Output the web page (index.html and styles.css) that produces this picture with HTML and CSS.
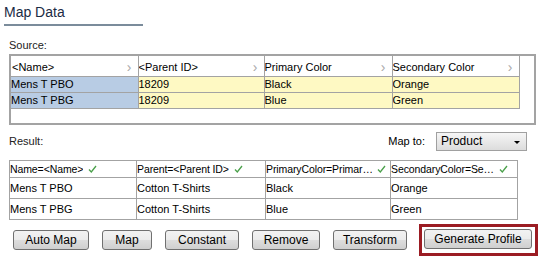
FILE: index.html
```html
<!DOCTYPE html>
<html>
<head>
<meta charset="utf-8">
<link rel="stylesheet" href="styles.css">
</head>
<body>
<div class="page">
  <div class="title">Map Data</div>
  <div class="label source-label">Source:</div>
  <div class="srcbox">
    <table class="src">
      <colgroup><col class="c1"><col class="c2"><col class="c3"><col class="c4"></colgroup>
      <tr class="hdr">
        <td><div class="hc"><span class="htext">&lt;Name&gt;</span><span class="chev">›</span></div></td>
        <td><div class="hc"><span class="htext">&lt;Parent ID&gt;</span><span class="chev">›</span></div></td>
        <td><div class="hc"><span class="htext">Primary Color</span><span class="chev">›</span></div></td>
        <td><div class="hc"><span class="htext">Secondary Color</span><span class="chev">›</span></div></td>
      </tr>
      <tr class="data">
        <td class="blue">Mens T PBO</td><td class="yel">18209</td><td class="yel">Black</td><td class="yel">Orange</td>
      </tr>
      <tr class="data">
        <td class="blue">Mens T PBG</td><td class="yel">18209</td><td class="yel">Blue</td><td class="yel">Green</td>
      </tr>
    </table>
  </div>
  <div class="resrow">
    <span class="label">Result:</span>
    <span class="mapto">Map to:</span>
    <div class="select"><span>Product</span><span class="caret"></span></div>
  </div>
  <table class="res">
    <colgroup><col class="c1"><col class="c2"><col class="c3"><col class="c4"></colgroup>
    <tr class="rhdr">
      <td><div class="rc"><span class="rtext">Name=&lt;Name&gt;</span><svg class="ck" width="9" height="8" viewBox="0 0 9 8"><path d="M1 4.5 L3.3 7 L8 1" fill="none" stroke="#4aa04a" stroke-width="1.3"/></svg></div></td>
      <td><div class="rc"><span class="rtext">Parent=&lt;Parent ID&gt;</span><svg class="ck" width="9" height="8" viewBox="0 0 9 8"><path d="M1 4.5 L3.3 7 L8 1" fill="none" stroke="#4aa04a" stroke-width="1.3"/></svg></div></td>
      <td><div class="rc"><span class="rtext">PrimaryColor=Primar…</span><svg class="ck" width="9" height="8" viewBox="0 0 9 8"><path d="M1 4.5 L3.3 7 L8 1" fill="none" stroke="#4aa04a" stroke-width="1.3"/></svg></div></td>
      <td><div class="rc"><span class="rtext">SecondaryColor=Se…</span><svg class="ck" width="9" height="8" viewBox="0 0 9 8"><path d="M1 4.5 L3.3 7 L8 1" fill="none" stroke="#4aa04a" stroke-width="1.3"/></svg></div></td>
    </tr>
    <tr class="rdata"><td>Mens T PBO</td><td>Cotton T-Shirts</td><td>Black</td><td>Orange</td></tr>
    <tr class="rdata"><td>Mens T PBG</td><td>Cotton T-Shirts</td><td>Blue</td><td>Green</td></tr>
  </table>
  <div class="buttons">
    <button class="btn b-auto">Auto Map</button>
    <button class="btn b-map">Map</button>
    <button class="btn b-const">Constant</button>
    <button class="btn b-rem">Remove</button>
    <button class="btn b-trans">Transform</button>
    <div class="hilite"><button class="btn b-gen">Generate Profile</button></div>
  </div>
</div>
</body>
</html>
```
FILE: styles.css
```css
html, body { margin: 0; padding: 0; background: #fff; }
body {
  font-family: "Liberation Sans", Arial, sans-serif;
  font-size: 11px;
  color: #000;
  width: 539px;
  height: 260px;
  overflow: hidden;
}
.page { padding: 4px 0 0 0; }
.title {
  margin-left: 4px;
  width: 139px;
  font-size: 14px;
  line-height: 17px;
  color: #1b2b44;
  padding-bottom: 3px;
  border-bottom: 2px solid #7b8c9b;
}
.label { color: #222; }
.source-label { margin: 13px 0 0 9px; line-height: 12px; }
.srcbox {
  margin: 3px 0 0 9px;
  width: 523px;
  height: 67px;
  border: 2px solid #a3a3a3;
}
table { border-collapse: collapse; table-layout: fixed; }
table.src { width: 508px; }
.src col.c1 { width: 127px; }
.src col.c2 { width: 126px; }
.src col.c3 { width: 128px; }
.src col.c4 { width: 127px; }
.src td {
  border: 1px solid #a3a3a3;
  padding: 0;
  white-space: nowrap;
  overflow: hidden;
}
.src tr.hdr td { height: 20px; border-top: none; }
.src tr.hdr td:first-child { border-left: none; padding-left: 1px; }
.src tr.data td:first-child { border-left: none; }
.hc {
  display: flex;
  align-items: center;
  justify-content: space-between;
  padding-top: 1px;
}
.chev {
  color: #a9a9a9;
  font-size: 14px;
  line-height: 12px;
  margin-right: 6px;
}
.src tr.data td { height: 15px; line-height: 15px; }
.blue { background: #b8cce4; }
.yel { background: #fef9c3; }
.resrow {
  display: flex;
  align-items: center;
  margin: 6px 0 0 9px;
  height: 20px;
}
.mapto { margin-left: 345px; }
.select {
  margin-left: 11px;
  width: 91px;
  height: 19px;
  border: 1px solid #a0a0a0;
  box-sizing: border-box;
  background: linear-gradient(#f6f6f6, #dcdcdc);
  display: flex;
  align-items: center;
  padding-left: 4px;
  font-size: 12px;
  position: relative;
}
.caret {
  position: absolute;
  right: 6px;
  top: 8px;
  width: 0; height: 0;
  border-left: 3px solid transparent;
  border-right: 3px solid transparent;
  border-top: 3px solid #000;
}
table.res { margin: 9px 0 0 9px; width: 508px; }
.res col.c1 { width: 127px; }
.res col.c2 { width: 129px; }
.res col.c3 { width: 125px; }
.res col.c4 { width: 127px; }
.res td {
  border: 1px solid #a3a3a3;
  padding: 0;
  white-space: nowrap;
  overflow: hidden;
}
.res tr.rhdr td { height: 16px; font-size: 10.5px; letter-spacing: -0.1px; }
.rc {
  display: flex;
  align-items: center;
  padding-right: 4px;
}
.rtext {
  overflow: hidden;
  white-space: nowrap;
  min-width: 0;
  flex: 0 1 auto;
}
.ck {
  flex: 0 0 auto;
  margin-left: 5px;
}
.res tr.rdata td { height: 20px; }
.buttons {
  display: flex;
  align-items: center;
  margin: 4px 0 0 13px;
}
.btn {
  font-family: inherit;
  font-size: 12px;
  height: 20px;
  padding: 0;
  border: 1px solid #707070;
  border-radius: 3px;
  background: linear-gradient(#f2f2f2 0%, #ebebeb 50%, #dddddd 51%, #cfcfcf 100%);
  color: #000;
}
.b-auto { width: 76px; }
.b-map { width: 50px; margin-left: 13px; }
.b-const { width: 74px; margin-left: 13px; }
.b-rem { width: 68px; margin-left: 13px; }
.b-trans { width: 74px; margin-left: 13px; }
.hilite {
  margin-left: 12px;
  border: 3px solid #9b1c23;
  padding: 2px 3px 4px 2px;
}
.b-gen { width: 108px; }
```
